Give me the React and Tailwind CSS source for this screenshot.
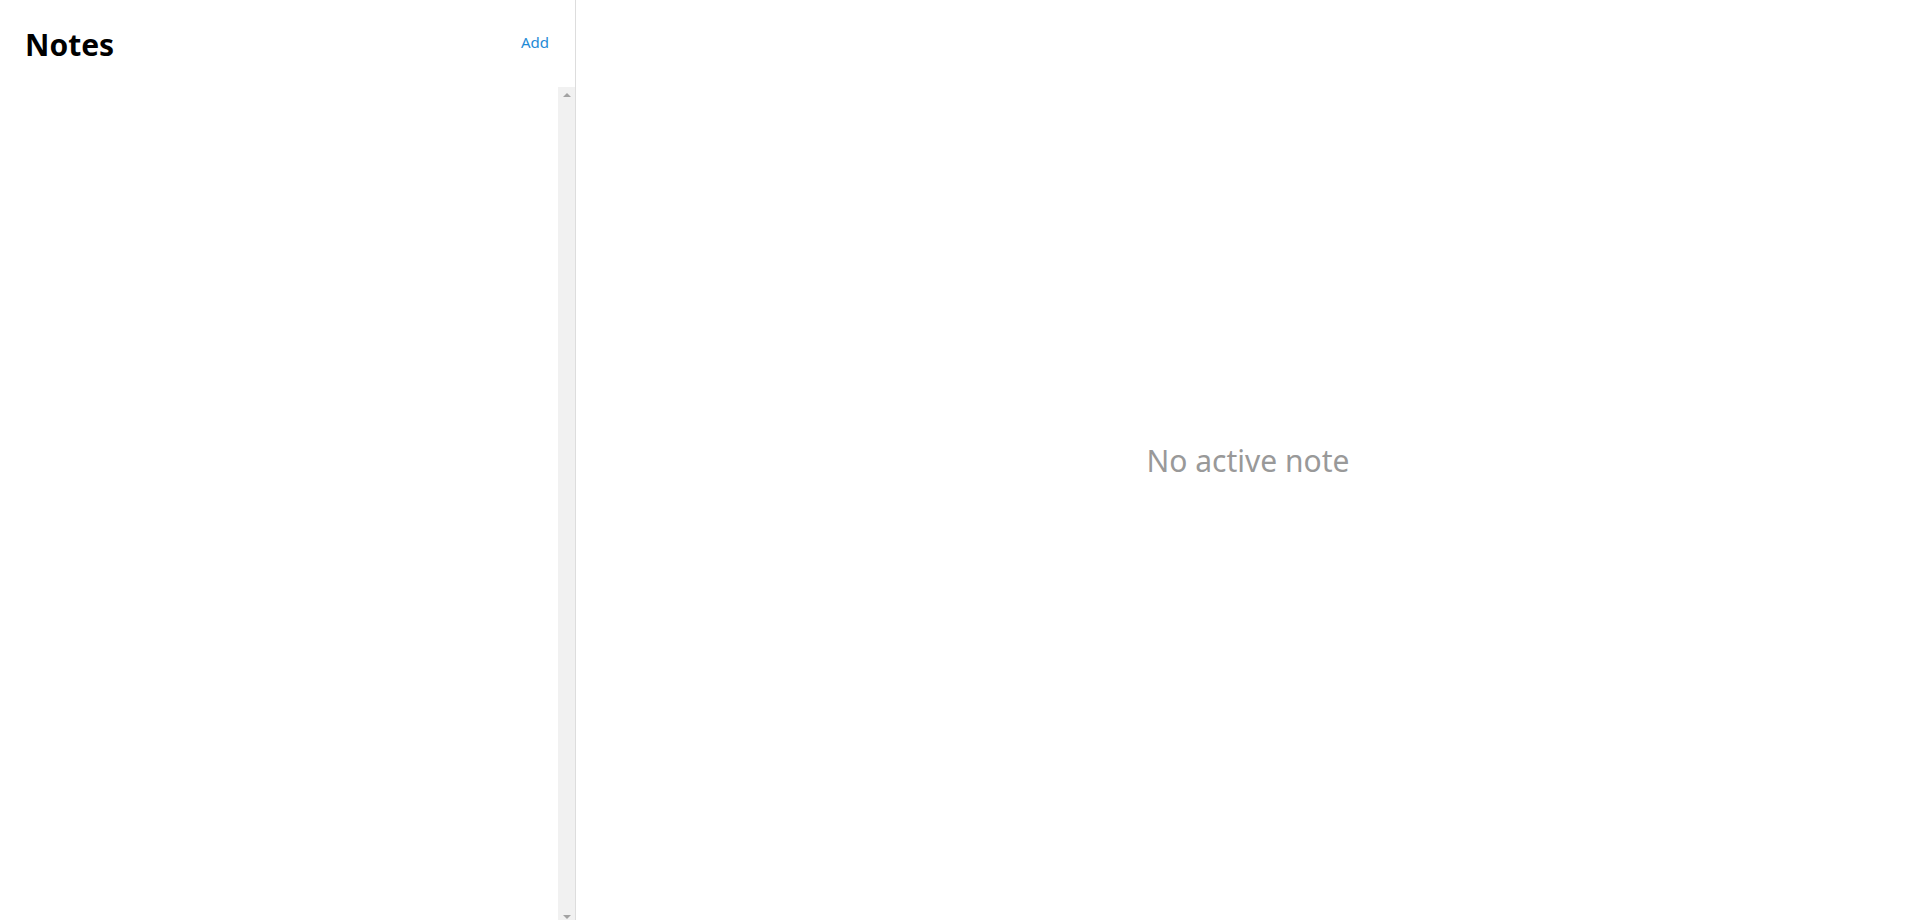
export default function App() {
  return (
    <div className="flex h-[920px] w-full overflow-hidden bg-white font-['Noto_Sans','Open_Sans',sans-serif]">
      {/* Sidebar */}
      <aside className="flex w-[576px] shrink-0 flex-col border-r border-[#dddddd]">
        <header className="flex h-[87px] shrink-0 items-start justify-between pl-[25px] pr-[26px]">
          <h1 className="mt-[24px] text-[30px] font-bold leading-[42px] text-black">Notes</h1>
          <button type="button" className="mt-[31px] text-[15px] leading-[22px] text-[#1e8ad6]">
            Add
          </button>
        </header>

        <div className="flex min-h-0 flex-1">
          <ul className="flex-1" />
          {/* scrollbar */}
          <div className="flex w-[17px] shrink-0 flex-col items-center justify-between bg-[#f1f1f1] pt-[6px] pb-[1px]">
            <span className="h-0 w-0 border-x-[4px] border-b-[4px] border-x-transparent border-b-[#a3a3a3]" />
            <span className="h-0 w-0 border-x-[4px] border-t-[4px] border-x-transparent border-t-[#a3a3a3]" />
          </div>
        </div>
      </aside>

      {/* Main */}
      <main className="flex flex-1 items-center justify-center">
        <p className="mt-[2px] text-[30px] leading-[40px] text-[#999999]">No active note</p>
      </main>
    </div>
  )
}
